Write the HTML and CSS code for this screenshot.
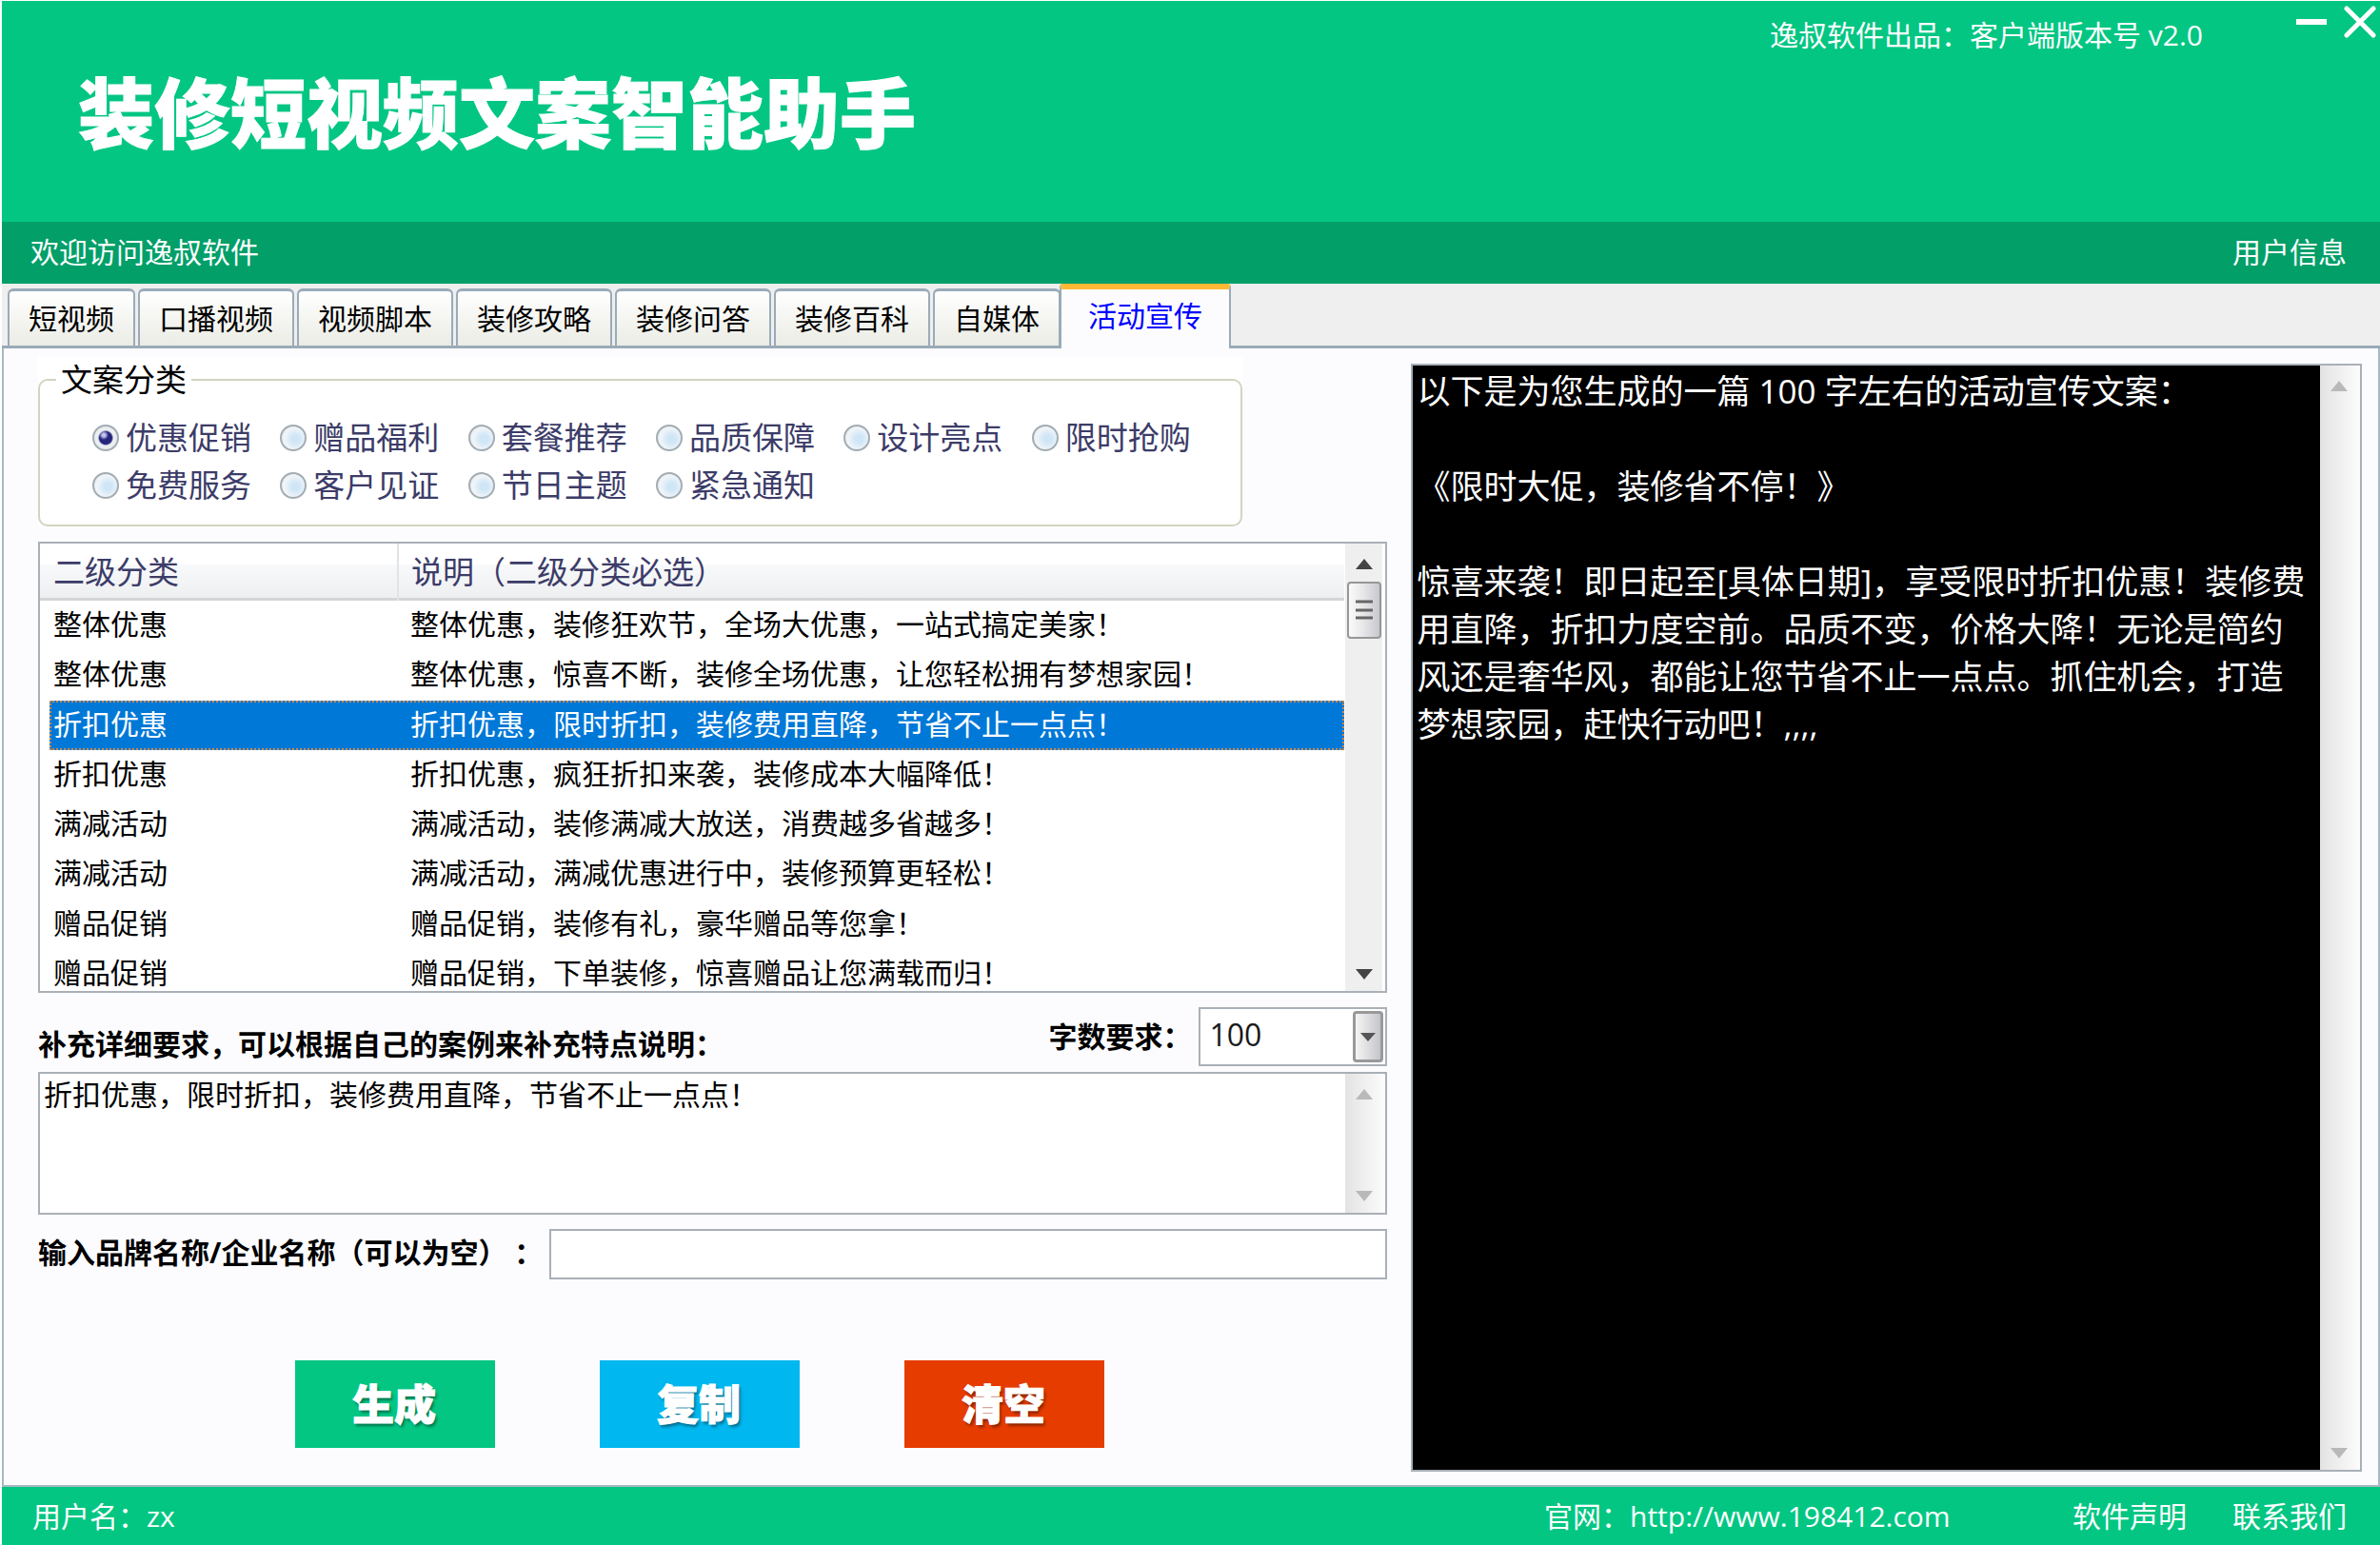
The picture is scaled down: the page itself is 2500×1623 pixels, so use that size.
FILE: index.html
```html
<!DOCTYPE html>
<html lang="zh-CN">
<head>
<meta charset="utf-8">
<title>装修短视频文案智能助手</title>
<link rel="stylesheet" href="styles.css">
</head>
<body>
<header class="banner">
  <h1 class="title">装修短视频文案智能助手</h1>
  <p class="version">逸叔软件出品：客户端版本号 v2.0</p>
  <div class="window-controls">
    <button type="button" class="window-button" aria-label="最小化"><svg width="34" height="34" viewBox="0 0 34 34"><path d="M1 17H33" stroke="#fff" stroke-width="6"/></svg></button>
    <button type="button" class="window-button" aria-label="关闭"><svg width="34" height="34" viewBox="0 0 34 34"><path d="M3 3L31 31M31 3L3 31" stroke="#fff" stroke-width="5" stroke-linecap="round"/></svg></button>
  </div>
</header>
<div class="welcome">
  <span>欢迎访问逸叔软件</span>
  <a href="#user">用户信息</a>
</div>
<nav class="tabs">
  <button type="button" class="tab">短视频</button>
  <button type="button" class="tab">口播视频</button>
  <button type="button" class="tab">视频脚本</button>
  <button type="button" class="tab">装修攻略</button>
  <button type="button" class="tab">装修问答</button>
  <button type="button" class="tab">装修百科</button>
  <button type="button" class="tab">自媒体</button>
  <button type="button" class="tab tab-active">活动宣传</button>
</nav>
<main class="page">
  <form class="form">
    <div class="group-wrap">
      <fieldset class="group">
        <legend>文案分类</legend>
        <div class="options">
          <label class="option"><input type="radio" name="kind" checked>优惠促销</label>
          <label class="option"><input type="radio" name="kind">赠品福利</label>
          <label class="option"><input type="radio" name="kind">套餐推荐</label>
          <label class="option"><input type="radio" name="kind">品质保障</label>
          <label class="option"><input type="radio" name="kind">设计亮点</label>
          <label class="option"><input type="radio" name="kind">限时抢购</label>
          <label class="option"><input type="radio" name="kind">免费服务</label>
          <label class="option"><input type="radio" name="kind">客户见证</label>
          <label class="option"><input type="radio" name="kind">节日主题</label>
          <label class="option"><input type="radio" name="kind">紧急通知</label>
        </div>
      </fieldset>
    </div>

    <div class="box list">
      <div class="list-view">
        <table class="topics">
          <thead><tr><th class="col-kind">二级分类</th><th>说明（二级分类必选）</th></tr></thead>
          <tbody>
            <tr><td>整体优惠</td><td>整体优惠，装修狂欢节，全场大优惠，一站式搞定美家！</td></tr>
            <tr><td>整体优惠</td><td>整体优惠，惊喜不断，装修全场优惠，让您轻松拥有梦想家园！</td></tr>
            <tr class="selected"><td>折扣优惠</td><td>折扣优惠，限时折扣，装修费用直降，节省不止一点点！</td></tr>
            <tr><td>折扣优惠</td><td>折扣优惠，疯狂折扣来袭，装修成本大幅降低！</td></tr>
            <tr><td>满减活动</td><td>满减活动，装修满减大放送，消费越多省越多！</td></tr>
            <tr><td>满减活动</td><td>满减活动，满减优惠进行中，装修预算更轻松！</td></tr>
            <tr><td>赠品促销</td><td>赠品促销，装修有礼，豪华赠品等您拿！</td></tr>
            <tr><td>赠品促销</td><td>赠品促销，下单装修，惊喜赠品让您满载而归！</td></tr>
          </tbody>
        </table>
      </div>
      <div class="scroll scroll-active">
        <svg class="arrow" width="18" height="11" viewBox="0 0 18 11"><path d="M9 0L18 11H0Z"/></svg>
        <span class="thumb"><svg width="18" height="22" viewBox="0 0 18 22"><path d="M0 2H18M0 11H18M0 19H18" stroke="#666" stroke-width="3"/></svg></span>
        <svg class="arrow arrow-down" width="18" height="11" viewBox="0 0 18 11"><path d="M0 0H18L9 11Z"/></svg>
      </div>
    </div>

    <div class="detail-head">
      <label class="caption" for="detail">补充详细要求，可以根据自己的案例来补充特点说明：</label>
      <div class="count">
        <label class="caption" for="count">字数要求：</label>
        <div class="combo">
          <select id="count"><option>100</option></select>
          <span class="combo-button"><svg width="16" height="9" viewBox="0 0 16 9"><path d="M0 0H16L8 9Z" fill="#555"/></svg></span>
        </div>
      </div>
    </div>

    <div class="box detail">
      <textarea id="detail" class="detail-text">折扣优惠，限时折扣，装修费用直降，节省不止一点点！</textarea>
      <div class="scroll">
        <svg class="arrow" width="18" height="11" viewBox="0 0 18 11"><path d="M9 0L18 11H0Z"/></svg>
        <svg class="arrow arrow-down" width="18" height="11" viewBox="0 0 18 11"><path d="M0 0H18L9 11Z"/></svg>
      </div>
    </div>

    <div class="brand">
      <label class="caption brand-label" for="brand">输入品牌名称/企业名称（可以为空） ：</label>
      <input id="brand" class="box brand-input" type="text">
    </div>

    <div class="actions">
      <button type="button" class="action action-generate">生成</button>
      <button type="button" class="action action-copy">复制</button>
      <button type="button" class="action action-clear">清空</button>
    </div>
  </form>

  <section class="box output">
    <textarea class="output-text" aria-label="生成结果">以下是为您生成的一篇 100 字左右的活动宣传文案：

《限时大促，装修省不停！》

惊喜来袭！即日起至[具体日期]，享受限时折扣优惠！装修费
用直降，折扣力度空前。品质不变，价格大降！无论是简约
风还是奢华风，都能让您节省不止一点点。抓住机会，打造
梦想家园，赶快行动吧！,,,,</textarea>
    <div class="scroll">
      <svg class="arrow" width="18" height="11" viewBox="0 0 18 11"><path d="M9 0L18 11H0Z"/></svg>
      <svg class="arrow arrow-down" width="18" height="11" viewBox="0 0 18 11"><path d="M0 0H18L9 11Z"/></svg>
    </div>
  </section>
</main>
<footer class="status">
  <span class="user">用户名：zx</span>
  <span class="site">官网：<a href="http://www.198412.com">http://www.198412.com</a></span>
  <a class="notice" href="#notice">软件声明</a>
  <a href="#contact">联系我们</a>
</footer>
</body>
</html>
```

FILE: styles.css
```css
* { box-sizing: border-box; }

body {
  margin: 0;
  min-height: 100vh;
  display: flex;
  flex-direction: column;
  border-left: 2px solid #fff;
  border-top: 1px solid #fff;
  background: #fcfcff;
  color: #000;
  font: 30px/46px "Open Sans", "Noto Sans CJK SC", sans-serif;
}

button, input, select, textarea { font: inherit; margin: 0; border-radius: 0; }
a { color: inherit; text-decoration: none; }

/* Banner */
.banner {
  display: flex;
  align-items: flex-start;
  height: 232px;
  padding: 0 4px 0 80px;
  background: #03c683;
  color: #fff;
}
.title {
  flex: 1;
  margin: 0;
  padding-top: 67px;
  font-size: 80px;
  line-height: 100px;
  font-weight: 900;
  -webkit-text-stroke: 1px #fff;
}
.version { margin: 0; padding-top: 13px; width: 552px; }
.window-controls { display: flex; gap: 17px; padding-top: 5px; }
.window-button {
  display: block;
  width: 34px;
  height: 34px;
  padding: 0;
  border: 0;
  background: none;
}
.window-button svg { display: block; }

.welcome {
  display: flex;
  justify-content: space-between;
  align-items: center;
  height: 65px;
  padding: 0 35px 2px 30px;
  background: #029f69;
  color: #fff;
}

/* Tabs */
.tabs {
  display: flex;
  align-items: flex-end;
  gap: 3px;
  height: 68px;
  padding-left: 6px;
  background: #efefef;
  border-bottom: 3px solid #9aabb8;
}
.tab {
  height: 60px;
  padding: 0 20px;
  border: 2px solid #9aabb8;
  border-top-width: 3px;
  border-bottom: 0;
  border-radius: 6px 6px 0 0;
  background: linear-gradient(#fff, #ebece5);
  color: #000;
}
.tab-active {
  position: relative;
  height: 68px;
  margin: 0 0 -3px -4px;
  padding: 0 28px 6px;
  border-top: 6px solid #fdb934;
  border-radius: 4px 4px 0 0;
  background: #fcfcff;
  color: #00f;
}

/* Page */
.page {
  flex: 1;
  display: grid;
  grid-template-columns: 1418fr 999fr;
  gap: 25px;
  padding: 0 17px 0 36px;
  border: 2px solid #a7b8c4;
  border-top: 0;
}
.form { padding-top: 9px; min-width: 0; }
.box { border: 2px solid #a9b0b7; background: #fff; }

.group-wrap { width: 1265px; max-width: 100%; background: #fff; }
.group {
  margin: 0;
  min-width: 0;
  padding: 12px 22px 16px 55px;
  border: 2px solid #d3d4c0;
  border-radius: 10px;
}
.group legend {
  margin-left: -38px;
  padding: 0 5px;
  font-size: 33px;
  line-height: 48px;
}
.options { display: grid; grid-template-columns: repeat(6, 1fr); }
.option {
  display: flex;
  align-items: center;
  gap: 7px;
  font-size: 33px;
  line-height: 50px;
  color: #3c3c68;
  white-space: nowrap;
}
.option input {
  appearance: none;
  width: 28px;
  height: 28px;
  border: 2px solid #a3adb3;
  border-radius: 50%;
  background: radial-gradient(circle at 60% 55%, #cfe6f7 0 20%, #f2f5f8 60%, #d9dee1 100%);
}
.option input:checked {
  background: radial-gradient(circle at 42% 38%, #c3c3f0 0 8%, transparent 24%), radial-gradient(circle, #25257c 0 38%, #eef1f4 48%, #dfe4e7 100%);
}

/* Topic list */
.list {
  display: flex;
  height: 474px;
  margin-top: 16px;
  padding-right: 3px;
}
.list-view {
  flex: 1;
  overflow: hidden;
  padding-left: 10px;
  background: linear-gradient(#fff 22px, #f8f9fb 22px, #eeeff1 57px, #d5d5d5 57px, #d5d5d5 60px, #fff 60px) no-repeat;
}
.topics {
  width: 100%;
  height: 478px;
  border-collapse: collapse;
  table-layout: fixed;
}
.topics th {
  height: 60px;
  padding: 0 4px;
  border-right: 0;
  font-size: 33px;
  font-weight: 400;
  text-align: left;
  color: #3c3c68;
}
.topics th + th { border-left: 2px solid #e2e3e5; }
.topics .col-kind { width: 366px; }
.topics td { height: 52px; padding: 0 4px 2px; line-height: 32px; white-space: nowrap; }
.topics td + td, .topics th + th { padding-left: 13px; }
.topics .selected {
  background: #0078d7;
  color: #fff;
  outline: 2px dotted #c98a4e;
  outline-offset: -2px;
}

/* Scroll bars */
.scroll {
  display: flex;
  flex: none;
  flex-direction: column;
  align-items: center;
  width: 42px;
  padding: 16px 3px 12px 0;
  background: linear-gradient(90deg, #e3e3e3, #fcfcfc);
}
.arrow { flex: none; fill: #b9b9b9; }
.arrow-down { margin-top: auto; }
.scroll-active { width: 39px; padding-right: 0; background: #efefef; margin-left: 1px; }
.scroll-active .arrow { fill: #444; }
.thumb {
  display: flex;
  align-items: center;
  justify-content: center;
  width: 36px;
  height: 60px;
  margin-top: 13px;
  border: 2px solid #979797;
  border-radius: 4px;
  background: linear-gradient(90deg, #fafafa, #e8e8ea 45%, #c8c8ce);
}

/* Detail */
.caption { font-weight: 700; white-space: nowrap; }
.detail-head {
  display: flex;
  align-items: flex-end;
  justify-content: space-between;
  padding: 15px 0 6px;
}
.count { display: flex; align-items: center; gap: 8px; }
.combo {
  display: flex;
  width: 198px;
  height: 62px;
  padding: 2px;
  border: 2px solid #a9b0b7;
  background: #fff;
}
.combo select {
  appearance: none;
  flex: 1;
  min-width: 0;
  padding: 0 7px 4px;
  border: 0;
  background: none;
  color: #1a1a1a;
  font-size: 32px;
}
.combo-button {
  display: flex;
  align-items: center;
  justify-content: center;
  width: 32px;
  border: 3px solid #999;
  border-radius: 4px;
  background: linear-gradient(90deg, #f4f4f4, #dedee0 50%, #c4c4cc);
}
.detail { display: flex; height: 150px; }
.detail-text {
  flex: 1;
  min-width: 0;
  padding: 0 4px;
  border: 0;
  resize: none;
  overflow: hidden;
  background: none;
  line-height: 44px;
}

.brand { display: flex; align-items: center; gap: 7px; margin-top: 15px; }
.brand-label { padding-bottom: 4px; }
.brand-input { flex: 1; min-width: 0; height: 53px; }

.actions { display: flex; gap: 110px; padding: 85px 0 37px 270px; }
.action {
  width: 210px;
  height: 92px;
  padding: 0 2px 0 0;
  border: 0;
  color: #fff;
  font-size: 44px;
  font-weight: 900;
  -webkit-text-stroke: 1px #fff;
  text-shadow: 2px 3px 3px rgba(0, 0, 0, 0.4);
}
.action-generate { background: #03c683; }
.action-copy { background: #00b7ef; }
.action-clear { background: #e63c00; }

/* Output */
.output { display: flex; min-width: 0; margin: 16px 0 14px; }
.output-text {
  flex: 1;
  min-width: 0;
  padding: 2px 4px;
  border: 0;
  resize: none;
  overflow: hidden;
  background: #000;
  color: #fff;
  font-size: 35px;
  line-height: 50px;
  white-space: pre;
}

/* Status bar */
.status {
  display: flex;
  align-items: center;
  height: 61px;
  padding: 0 35px 0 32px;
  background: #03c683;
  color: #fff;
}
.user { flex: 1; }
.site { width: 555px; }
.notice { margin-right: 48px; }
```
